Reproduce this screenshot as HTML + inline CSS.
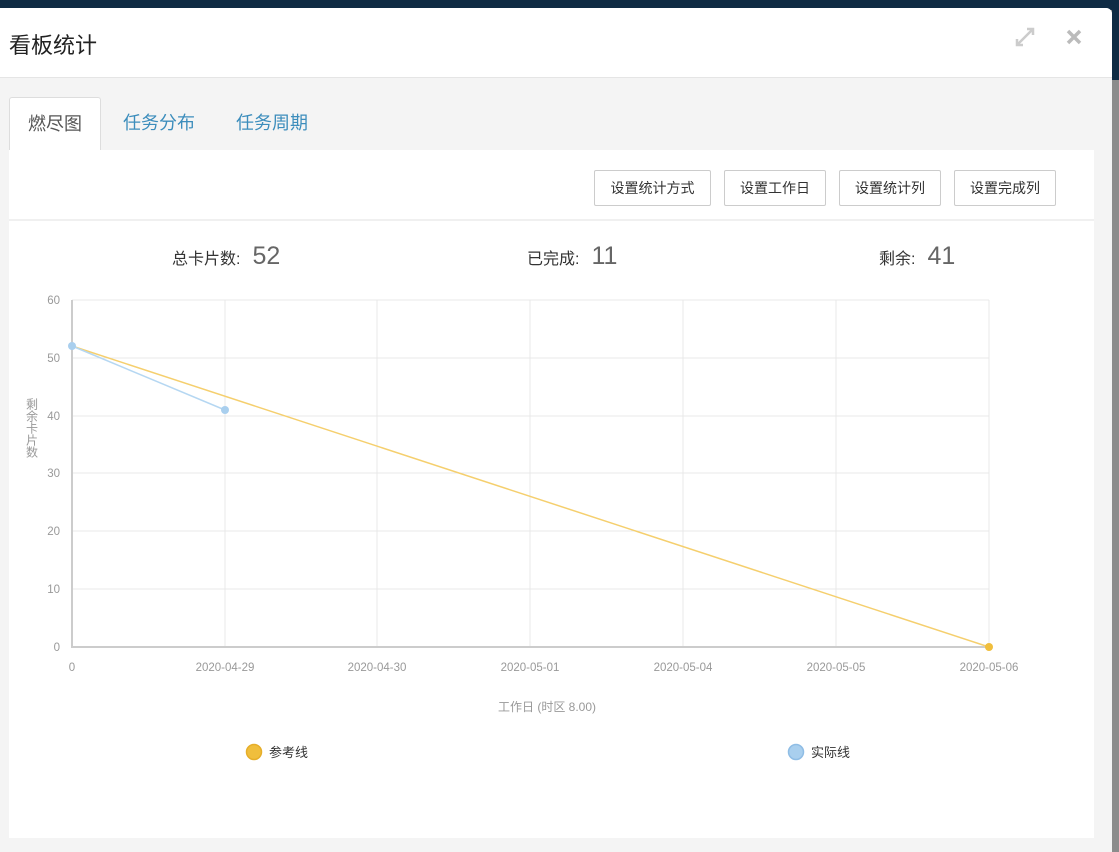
<!DOCTYPE html>
<html><head><meta charset="utf-8"><style>
*{margin:0;padding:0;box-sizing:border-box}
body{width:1119px;height:852px;overflow:hidden;background:#7d7d7d;font-family:"Liberation Sans","Noto Sans CJK SC",sans-serif;position:relative}
.top{position:absolute;left:0;top:0;width:1119px;height:10px;background:#0f2b44}
.rstrip{position:absolute;left:1112px;top:0;width:7px;height:852px;background:linear-gradient(#0f2b44 0,#0f2b44 80px,#8c8c8c 80px)}
.modal{position:absolute;left:0;top:8px;width:1112px;height:844px;background:#f4f4f4;border-radius:0 6px 0 0}
.hdr{height:70px;background:#fff;border-bottom:1px solid #e5e5e5;position:relative;border-radius:0 6px 0 0}
.hdr h1{position:absolute;left:9px;top:20px;font-size:22px;font-weight:normal;color:#222}
.tabs{position:absolute;top:89px;left:9px;height:53px}
.tab{position:absolute;top:0;height:53px;font-size:18px;line-height:52px;color:#3c8dbc;white-space:nowrap}
.tab.a{left:0;width:92px;background:#fff;border:1px solid #ddd;border-bottom:none;color:#555;text-align:center;border-radius:3px 3px 0 0}
.panel{position:absolute;left:9px;top:142px;width:1085px;height:688px;background:#fff}
.bar{height:71px;border-bottom:2px solid #f0f0f0;position:relative}
.btn{position:absolute;top:20px;height:36px;border:1px solid #ccc;border-radius:2px;font-size:14px;line-height:34px;text-align:center;color:#333;background:#fff;white-space:nowrap}
.st{position:absolute;top:92px;font-size:16px;color:#333;white-space:nowrap}
.st b{font-weight:normal;font-size:25px;color:#666;margin-left:12px}
</style></head><body>
<div class="top"></div><div class="rstrip"></div>
<div class="modal">
<div class="hdr"><h1>看板统计</h1>
<svg style="position:absolute;left:1014px;top:18px" width="22" height="22" viewBox="0 0 22 22" stroke="#ccc" stroke-width="2.5" fill="none"><path d="M3 19L19 3M13 3h6v6M3 13v6h6"/></svg>
<svg style="position:absolute;left:1066px;top:21px" width="16" height="16" viewBox="0 0 16 16" stroke="#bbb" stroke-width="3.5"><path d="M2 2L14 14M14 2L2 14"/></svg>
</div>
<div class="tabs"><div class="tab a">燃尽图</div><div class="tab" style="left:114px">任务分布</div><div class="tab" style="left:227px">任务周期</div></div>
<div class="panel">
<div class="bar">
<div class="btn" style="left:585px;width:117px">设置统计方式</div>
<div class="btn" style="left:715px;width:102px">设置工作日</div>
<div class="btn" style="left:830px;width:102px">设置统计列</div>
<div class="btn" style="left:945px;width:102px">设置完成列</div>
</div>
<div class="st" style="left:163px">总卡片数:<b>52</b></div>
<div class="st" style="left:518px">已完成:<b>11</b></div>
<div class="st" style="left:870px">剩余:<b>41</b></div>
</div>
</div>
<svg style="position:absolute;left:0;top:0" width="1119" height="852" font-family="Liberation Sans,sans-serif" font-size="11.5" fill="#999">
<g stroke="#e8e8e8" stroke-width="1">
<path d="M72 300H989M72 358H989M72 416H989M72 473H989M72 531H989M72 589H989"/>
<path d="M225 300V647M377 300V647M530 300V647M683 300V647M836 300V647M989 300V647"/>
</g>
<path d="M72 300V647H989" stroke="#ccc" stroke-width="2" fill="none"/>
<g text-anchor="end"><text x="60" y="304">60</text><text x="60" y="362">50</text><text x="60" y="420">40</text><text x="60" y="477">30</text><text x="60" y="535">20</text><text x="60" y="593">10</text><text x="60" y="651">0</text></g>
<g text-anchor="middle"><text x="72" y="671">0</text><text x="225" y="671">2020-04-29</text><text x="377" y="671">2020-04-30</text><text x="530" y="671">2020-05-01</text><text x="683" y="671">2020-05-04</text><text x="836" y="671">2020-05-05</text><text x="989" y="671">2020-05-06</text>
<text x="547" y="711" font-size="12" font-family="Liberation Sans,Noto Sans CJK SC,sans-serif">工作日 (时区 8.00)</text></g>
<text x="32" y="428" font-size="12" font-family="Noto Sans CJK SC,sans-serif" writing-mode="tb" text-anchor="middle">剩余卡片数</text>
<path d="M72 346L989 647" stroke="#f5cf6e" stroke-width="1.5"/>
<path d="M72 346L225 410" stroke="#b5d7f2" stroke-width="1.5"/>
<circle cx="72" cy="346" r="4" fill="#a9cfee"/><circle cx="225" cy="410" r="4" fill="#a9cfee"/><circle cx="989" cy="647" r="4" fill="#f0be3c"/>
<circle cx="254" cy="752" r="7.5" fill="#f0be3c" stroke="#e6ae2a" stroke-width="1.5"/>
<circle cx="796" cy="752" r="7.5" fill="#a9cfee" stroke="#8fbde5" stroke-width="1.5"/>
<g fill="#333" font-size="13" font-family="Liberation Sans,Noto Sans CJK SC,sans-serif"><text x="269" y="757">参考线</text><text x="811" y="757">实际线</text></g>
</svg>
</body></html>
